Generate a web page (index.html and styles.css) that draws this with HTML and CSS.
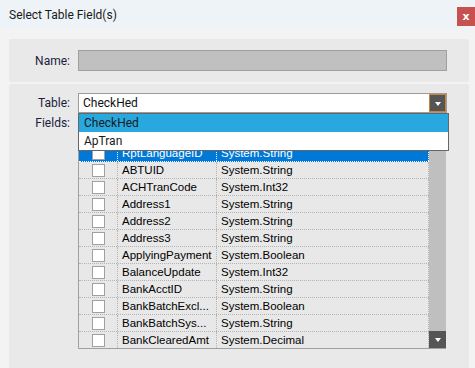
FILE: index.html
```html
<!DOCTYPE html>
<html lang="en">
<head>
    <meta charset="UTF-8">
    <meta name="viewport" content="width=device-width, initial-scale=1.0">
    <title>Select Table Field(s)</title>
    <link rel="stylesheet" href="styles.css">
</head>
<body>
    <div class="titlebar">
        <span class="title">Select Table Field(s)</span>
        <button class="close">x</button>
    </div>

    <div class="content">
        <div class="panel name-panel">
            <label class="field-label">Name:</label>
            <div class="name-input"></div>
        </div>

        <div class="panel table-panel">
            <div class="row">
                <label class="field-label">Table:</label>
                <div class="combo">
                    <span class="combo-text">CheckHed</span>
                    <span class="combo-btn"></span>
                    <!-- open dropdown list -->
                    <ul class="dropdown">
                        <li class="selected">CheckHed</li>
                        <li>ApTran</li>
                    </ul>
                </div>
            </div>

            <div class="row fields-row">
                <label class="field-label">Fields:</label>
                <div class="grid">
                    <div class="grid-body">
                        <div class="grid-head"></div>
                        <div class="grid-row active"><span class="c-check"><i class="box"></i></span><span class="c-name">RptLanguageID</span><span class="c-type">System.String</span></div>
                        <div class="grid-row"><span class="c-check"><i class="box"></i></span><span class="c-name">ABTUID</span><span class="c-type">System.String</span></div>
                        <div class="grid-row"><span class="c-check"><i class="box"></i></span><span class="c-name">ACHTranCode</span><span class="c-type">System.Int32</span></div>
                        <div class="grid-row"><span class="c-check"><i class="box"></i></span><span class="c-name">Address1</span><span class="c-type">System.String</span></div>
                        <div class="grid-row"><span class="c-check"><i class="box"></i></span><span class="c-name">Address2</span><span class="c-type">System.String</span></div>
                        <div class="grid-row"><span class="c-check"><i class="box"></i></span><span class="c-name">Address3</span><span class="c-type">System.String</span></div>
                        <div class="grid-row"><span class="c-check"><i class="box"></i></span><span class="c-name">ApplyingPayment</span><span class="c-type">System.Boolean</span></div>
                        <div class="grid-row"><span class="c-check"><i class="box"></i></span><span class="c-name">BalanceUpdate</span><span class="c-type">System.Int32</span></div>
                        <div class="grid-row"><span class="c-check"><i class="box"></i></span><span class="c-name">BankAcctID</span><span class="c-type">System.String</span></div>
                        <div class="grid-row"><span class="c-check"><i class="box"></i></span><span class="c-name">BankBatchExcl...</span><span class="c-type">System.Boolean</span></div>
                        <div class="grid-row"><span class="c-check"><i class="box"></i></span><span class="c-name">BankBatchSys...</span><span class="c-type">System.String</span></div>
                        <div class="grid-row"><span class="c-check"><i class="box"></i></span><span class="c-name">BankClearedAmt</span><span class="c-type">System.Decimal</span></div>
                    </div>
                    <div class="scrollbar">
                        <span class="scroll-down"></span>
                    </div>
                </div>
            </div>
        </div>
    </div>
</body>
</html>
```

FILE: styles.css
```css
* {
    margin: 0;
    padding: 0;
    box-sizing: border-box;
}

body {
    width: 475px;
    height: 368px;
    overflow: hidden;
    background-color: #F3F3F3;
    font-family: Roboto, "Noto Sans", sans-serif;
    font-size: 12px;
    color: #1C1C3C;
}

.titlebar {
    height: 29px;
    background-color: #EEF3F8;
    display: flex;
    align-items: center;
    justify-content: space-between;
    padding-left: 9px;
}

.title {
    color: #1A1A1A;
}

.close {
    align-self: flex-start;
    margin-top: 7px;
    width: 18px;
    height: 19px;
    border: none;
    background-color: #C75050;
    color: #FFFFFF;
    font-family: "DejaVu Sans", sans-serif;
    font-size: 11px;
    font-weight: bold;
    line-height: 17px;
}

.content {
    padding: 10px 6px 0 9px;
}

.panel {
    background-color: #E9E9E9;
    border-radius: 2px;
}

.name-panel {
    height: 43px;
    display: flex;
    align-items: center;
    margin-bottom: 2px;
}

.field-label {
    width: 62px;
    text-align: right;
    padding-right: 1px;
    flex-shrink: 0;
}

.name-input {
    margin-left: 7px;
    width: 369px;
    height: 21px;
    background-color: #C0C0C0;
    border: 1px solid #A0A0A0;
}

.table-panel {
    height: 290px;
    padding-top: 9px;
}

.row {
    display: flex;
    align-items: center;
}

.row .field-label {
    margin-right: 7px;
}

.combo {
    position: relative;
    width: 369px;
    height: 20px;
    background-color: #FFFFFF;
    border: 1px solid #9C9C9C;
    display: flex;
    align-items: center;
    justify-content: space-between;
    padding-left: 4px;
}

.combo-text {
    color: #111111;
}

.combo-btn {
    width: 17px;
    height: 18px;
    background-color: #555555;
    border: 1px solid #C6843C;
    display: flex;
    align-items: center;
    justify-content: center;
}

.combo-btn::after,
.scroll-down::after {
    content: "";
    border-left: 3px solid transparent;
    border-right: 3px solid transparent;
    border-top: 4px solid #FFFFFF;
    margin-top: 1px;
}

.dropdown {
    position: absolute;
    top: 19px;
    left: -1px;
    width: 371px;
    list-style: none;
    background-color: #FFFFFF;
    border: 1px solid #666666;
    z-index: 10;
}

.dropdown li {
    height: 18px;
    line-height: 18px;
    padding-left: 5px;
    color: #1A1A1A;
}

.dropdown li.selected {
    background-color: #29A8E0;
}

.fields-row {
    align-items: flex-start;
}

.fields-row .field-label {
    margin-top: 3px;
}

.grid {
    display: flex;
    width: 368px;
    border-left: 1px solid #A0A0A0;
    border-bottom: 1px solid #A0A0A0;
    font-family: "Liberation Sans", Arial, sans-serif;
    font-size: 11.5px;
    color: #000000;
}

.grid-body {
    width: 351px;
}

.grid-head {
    height: 32px;
    background-color: #E0E0E0;
}

.grid-row {
    display: flex;
    height: 17px;
    background-color: #E8E8E8;
    border-bottom: 1px dotted #B4B4B4;
}

.grid-row:last-child {
    border-bottom: none;
    height: 16px;
}

.grid-row span {
    display: flex;
    align-items: center;
    border-right: 1px dotted #B4B4B4;
    white-space: nowrap;
    overflow: hidden;
}

.c-check {
    width: 39px;
    justify-content: center;
}

.c-name {
    width: 99px;
    padding-left: 4px;
}

.c-type {
    flex: 1;
    padding-left: 4px;
}

.box {
    width: 13px;
    height: 13px;
    background-color: #FFFFFF;
    border: 1px solid #A0A0A0;
    margin-left: 1px;
}

.grid-row.active {
    background-color: #0078D7;
    color: #FFFFFF;
    border-bottom-color: #FFFFFF;
}

.grid-row.active span {
    border-right-color: #FFFFFF;
}

.scrollbar {
    width: 17px;
    background-color: #BFBFBF;
    display: flex;
    flex-direction: column;
    justify-content: flex-end;
}

.scroll-down {
    height: 17px;
    background-color: #555555;
    display: flex;
    align-items: center;
    justify-content: center;
}
```
